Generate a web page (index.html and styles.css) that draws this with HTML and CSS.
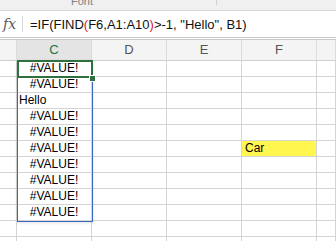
FILE: index.html
```html
<!DOCTYPE html>
<html lang="en">
<head>
    <meta charset="UTF-8">
    <title>Sheet</title>
    <link rel="stylesheet" href="styles.css">
</head>
<body>
    <div class="ribbon">
        <span class="ribbon-label">Font</span>
        <span class="ribbon-sep"></span>
    </div>

    <div class="formula-bar">
        <span class="fx">fx</span>
        <span class="fx-sep"></span>
        <span class="formula">=IF(FIND<span class="paren">(</span>F6,A1:A10<span class="paren">)</span>&gt;-1, "Hello", B1)</span>
    </div>

    <div class="sheet">
        <div class="cell head"></div>
        <div class="cell head active">C</div>
        <div class="cell head">D</div>
        <div class="cell head">E</div>
        <div class="cell head">F</div>
        <div class="cell head"></div>

        <div class="cell"></div><div class="cell center">#VALUE!</div><div class="cell"></div><div class="cell"></div><div class="cell"></div><div class="cell"></div>
        <div class="cell"></div><div class="cell center">#VALUE!</div><div class="cell"></div><div class="cell"></div><div class="cell"></div><div class="cell"></div>
        <div class="cell"></div><div class="cell">Hello</div><div class="cell"></div><div class="cell"></div><div class="cell"></div><div class="cell"></div>
        <div class="cell"></div><div class="cell center">#VALUE!</div><div class="cell"></div><div class="cell"></div><div class="cell"></div><div class="cell"></div>
        <div class="cell"></div><div class="cell center">#VALUE!</div><div class="cell"></div><div class="cell"></div><div class="cell"></div><div class="cell"></div>
        <div class="cell"></div><div class="cell center">#VALUE!</div><div class="cell"></div><div class="cell"></div><div class="cell yellow">Car</div><div class="cell"></div>
        <div class="cell"></div><div class="cell center">#VALUE!</div><div class="cell"></div><div class="cell"></div><div class="cell"></div><div class="cell"></div>
        <div class="cell"></div><div class="cell center">#VALUE!</div><div class="cell"></div><div class="cell"></div><div class="cell"></div><div class="cell"></div>
        <div class="cell"></div><div class="cell center">#VALUE!</div><div class="cell"></div><div class="cell"></div><div class="cell"></div><div class="cell"></div>
        <div class="cell"></div><div class="cell center">#VALUE!</div><div class="cell"></div><div class="cell"></div><div class="cell"></div><div class="cell"></div>
        <div class="cell"></div><div class="cell"></div><div class="cell"></div><div class="cell"></div><div class="cell"></div><div class="cell"></div>
        <div class="cell"></div><div class="cell"></div><div class="cell"></div><div class="cell"></div><div class="cell"></div><div class="cell"></div>

        <!-- selection overlays -->
        <div class="range"></div>
        <div class="active-cell"></div>
        <div class="handle"></div>
    </div>
</body>
</html>
```

FILE: styles.css
```css
body {
    margin: 0;
    font-family: "Liberation Sans", Arial, sans-serif;
    background: #fff;
    overflow: hidden;
}

.ribbon {
    height: 10px;
    background: #f0f0f0;
    border-bottom: 1px solid #d6d6d6;
    position: relative;
    overflow: hidden;
}

.ribbon-label {
    position: absolute;
    left: 71px;
    top: -5px;
    font-size: 11px;
    line-height: 12px;
    color: #808080;
}

.ribbon-sep {
    position: absolute;
    left: 216px;
    top: 0;
    width: 1px;
    height: 5px;
    background: #cfcfcf;
}

.formula-bar {
    height: 26px;
    display: flex;
    align-items: center;
    border-bottom: 3px double #c8c8c8;
}

.fx {
    font-family: "DejaVu Serif", "Liberation Serif", serif;
    font-style: italic;
    font-size: 14px;
    color: #5a5a5a;
    width: 22px;
    padding-left: 3px;
    box-sizing: border-box;
}

.fx-sep {
    width: 1px;
    height: 16px;
    background: #d8d8d8;
    margin-right: 7px;
}

.formula {
    font-size: 13px;
    color: #111;
    white-space: nowrap;
}

.paren {
    color: #d92020;
}

.sheet {
    display: grid;
    grid-template-columns: 17px 75px 75px 75px 75px 1fr;
    grid-template-rows: 21px;
    grid-auto-rows: 16px;
    position: relative;
}

.cell {
    border-right: 1px solid #d4d4d4;
    border-bottom: 1px solid #d4d4d4;
    font-size: 12px;
    line-height: 15px;
    padding-left: 2px;
    color: #000;
    white-space: nowrap;
    overflow: hidden;
}

.cell.head {
    line-height: 20px;
    background: #f4f4f4;
    color: #555;
    font-size: 13px;
    text-align: center;
    padding-left: 0;
    border-right-color: #dcdcdc;
    border-bottom-color: #cfcfcf;
}

.cell.head.active {
    background: #e4e4e4;
    color: #217346;
}

.cell.center {
    text-align: center;
    padding-left: 0;
}

.cell.yellow {
    background: #fff650;
    padding-left: 3px;
}

.range {
    position: absolute;
    left: 17px;
    top: 20px;
    width: 74px;
    height: 160px;
    border: 1px solid #3a66c4;
    box-shadow: 0 1px 3px rgba(0, 0, 0, 0.12);
}

.active-cell {
    position: absolute;
    left: 17px;
    top: 20px;
    width: 72px;
    height: 14px;
    border: 2px solid #2e7040;
}

.handle {
    position: absolute;
    left: 89px;
    top: 35px;
    width: 5px;
    height: 5px;
    background: #2e7040;
    border: 1px solid #fff;
}
```
